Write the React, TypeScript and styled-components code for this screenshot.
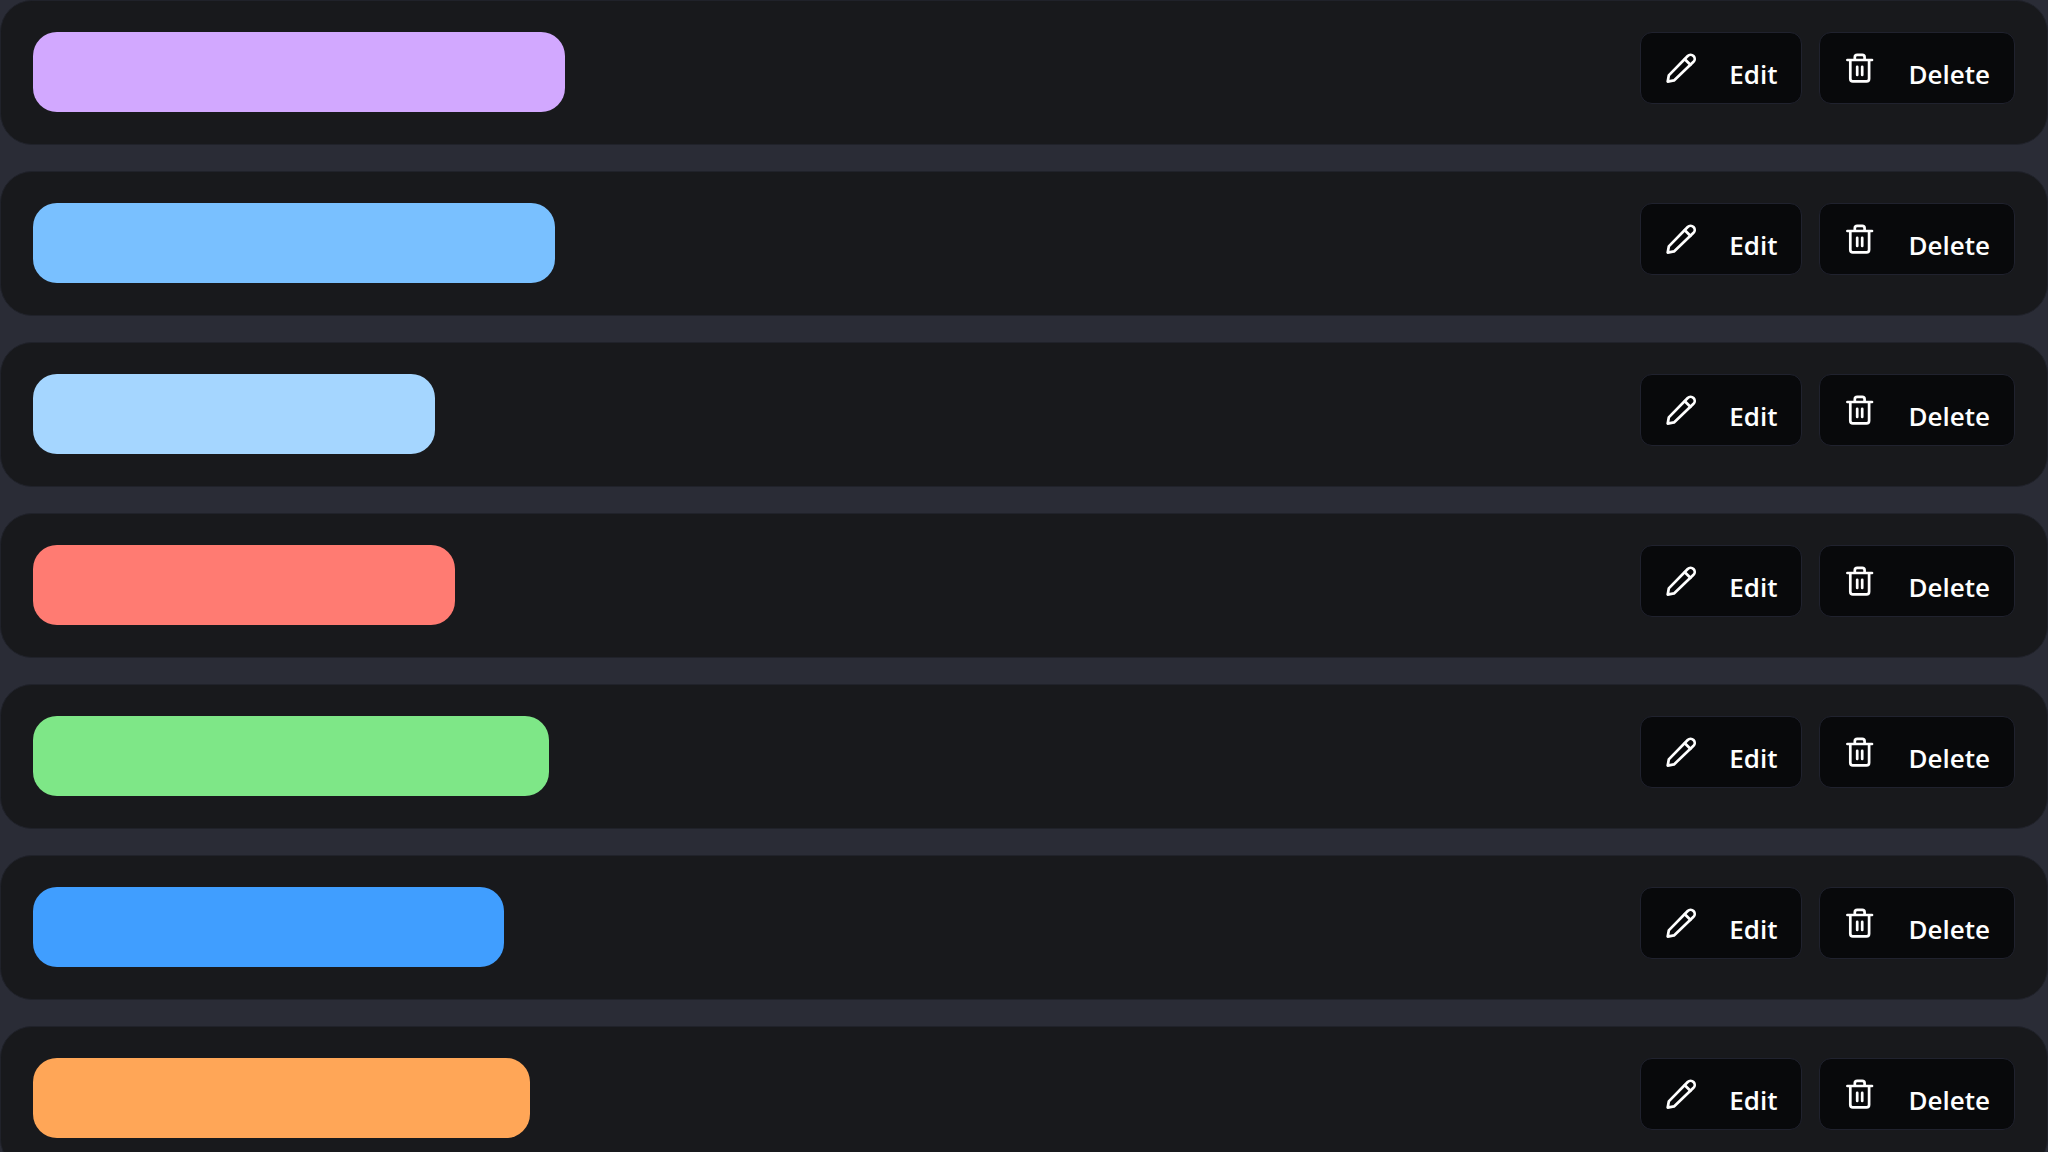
import React from "react";
import styled, { createGlobalStyle } from "styled-components";

const GlobalStyle = createGlobalStyle`
  * { box-sizing: border-box; }
  body {
    margin: 0;
    background: #2a2c36;
    font-family: "Open Sans", "Noto Sans", sans-serif;
    overflow: hidden;
  }
`;

const List = styled.ul`
  display: flex;
  flex-direction: column;
  gap: 26px;
  margin: 0;
  padding: 0;
  list-style: none;
`;

const Card = styled.li`
  display: flex;
  justify-content: space-between;
  align-items: flex-start;
  padding: 31px 32px 32px;
  border: 1px solid #20222a;
  border-radius: 32px;
  background: #18191c;
`;

const Swatch = styled.div<{ $color: string; $width: number }>`
  width: ${(p) => p.$width}px;
  height: 80px;
  border-radius: 24px;
  background: ${(p) => p.$color};
`;

const Actions = styled.div`
  display: flex;
  gap: 17px;
`;

const ActionButton = styled.button`
  display: flex;
  align-items: baseline;
  gap: 32px;
  height: 72px;
  padding: 19px 24px 16px;
  border: 1px solid #20222e;
  border-radius: 12px;
  background: #08090b;
  color: #fff;
  font-family: inherit;
  font-size: 26px;
  font-weight: 600;
  line-height: 28px;
  cursor: pointer;
`;

const Icon = styled.svg`
  flex: none;
  width: 32px;
  height: 32px;
  fill: none;
  stroke: currentColor;
  stroke-width: 2.7;
  stroke-linecap: round;
  stroke-linejoin: round;
`;

const PencilIcon = () => (
  <Icon viewBox="0 0 32 32" aria-hidden="true">
    <path d="M2.7 29.6 3.8 23.4 22.7 4a4.05 4.05 0 0 1 5.8 5.8L9 28.4Z" />
    <path d="m19.8 7.2 5.6 5.6" />
  </Icon>
);

const TrashIcon = () => (
  <Icon viewBox="0 0 32 32" aria-hidden="true">
    <path d="M3.4 8h24.6M10.8 8V5.2a2.4 2.4 0 0 1 2.4-2.4h5a2.4 2.4 0 0 1 2.4 2.4V8M6.3 8v18.8a2.6 2.6 0 0 0 2.6 2.6h13.6a2.6 2.6 0 0 0 2.6-2.6V8M13.2 14.8v8.2M18.2 14.8v8.2" />
  </Icon>
);

const tags = [
  { color: "#d2a8ff", width: 532 },
  { color: "#79c0ff", width: 522 },
  { color: "#a5d6ff", width: 402 },
  { color: "#ff7b72", width: 422 },
  { color: "#7ee787", width: 516 },
  { color: "#409eff", width: 471 },
  { color: "#ffa657", width: 497 },
];

export default function App() {
  return (
    <>
      <GlobalStyle />
      <List>
        {tags.map((tag) => (
          <Card key={tag.color}>
            <Swatch $color={tag.color} $width={tag.width} />
            <Actions>
              <ActionButton type="button">
                <PencilIcon />
                Edit
              </ActionButton>
              <ActionButton type="button">
                <TrashIcon />
                Delete
              </ActionButton>
            </Actions>
          </Card>
        ))}
      </List>
    </>
  );
}
